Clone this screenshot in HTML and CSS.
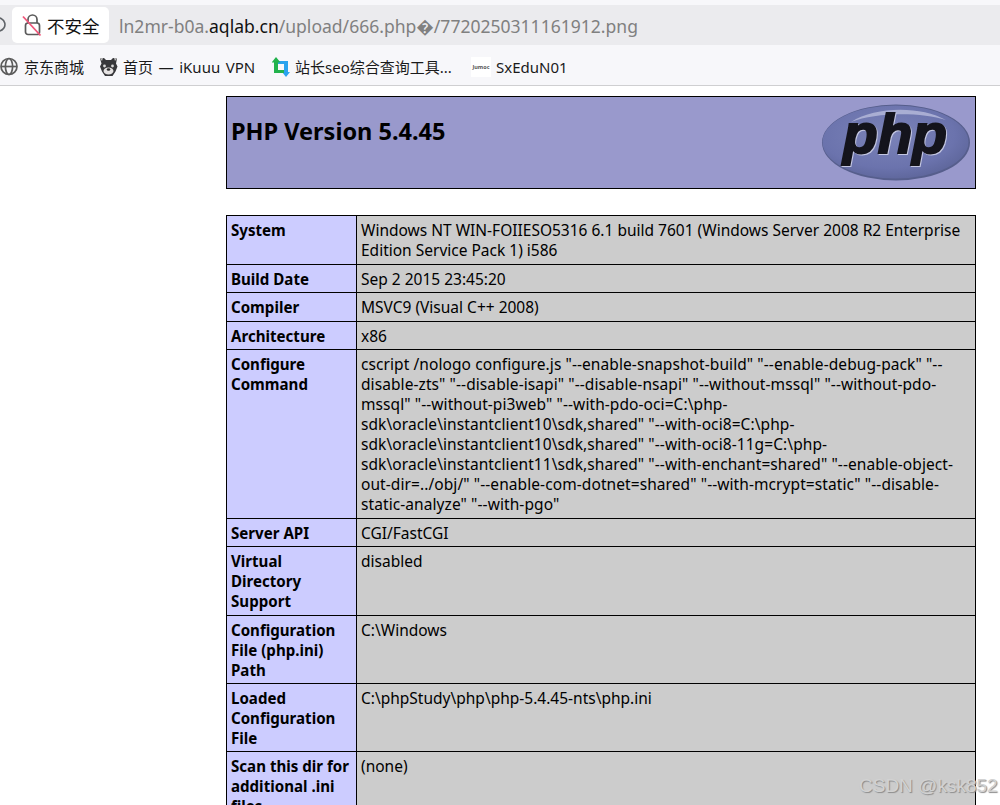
FILE: index.html
```html
<!DOCTYPE html>
<html lang="zh-CN">
<head>
<meta charset="utf-8">
<title>phpinfo()</title>
<link rel="stylesheet" href="styles.css">
</head>
<body>
<header class="chrome">
  <div class="addr-row">
    <svg class="reload" width="6" height="20" viewBox="0 0 6 20"><path d="M-4 3.500A6.500 6.500 0 1 1 -1 16" fill="none" stroke="#5f6368" stroke-width="1.600"/></svg>
    <div class="pill">
      <svg class="lock" width="20" height="24" viewBox="0 0 20 24"><path d="M6 10V6.500a4.500 4.500 0 0 1 9 0V10" fill="none" stroke="#5a5a5a" stroke-width="1.700"/><rect x="3.500" y="10" width="14" height="11.500" rx="2.500" fill="none" stroke="#5a5a5a" stroke-width="1.700"/><path d="M1 3.500 18.500 22.500" stroke="#f0567a" stroke-width="1.800"/></svg>
      <span class="insecure">不安全</span>
    </div>
    <div class="url"><span class="dim">ln2mr-b0a.</span>aqlab.cn<span class="dim">/upload/666.php�/7720250311161912.png</span></div>
  </div>
  <nav class="bookmarks">
    <div class="bm bm-jd">
      <svg class="bm-globe" width="19" height="19" viewBox="0 0 19 19"><g fill="none" stroke="#5c5c5c" stroke-width="1.700"><circle cx="9" cy="9.500" r="8"/><ellipse cx="9" cy="9.500" rx="3.600" ry="8"/><path d="M1 9.500h16"/></g></svg>
      <span>京东商城</span>
    </div>
    <div class="bm bm-ik">
      <svg width="19" height="20" viewBox="0 0 19 20"><path d="M1 1.500 5 1l2 2h5l2-2 4 .5-1 5 1.500 3-2 5-3 4.500H6l-3-4.500-2-5L2.500 6.500z" fill="#37373a"/><path d="M1 1.500 4 1 3 4zM18 1.500 15 1l1 3z" fill="#bdbdbd"/><ellipse cx="9.500" cy="14" rx="5" ry="3.500" fill="#e6e3e3"/><circle cx="5.500" cy="9" r="1.400" fill="#d8d8d8"/><circle cx="13.500" cy="9" r="1.400" fill="#d8d8d8"/><ellipse cx="9.500" cy="12.500" rx="1.800" ry="1.200" fill="#2c2c2c"/></svg>
      <span class="ik-label">首页 — iKuuu VPN</span>
    </div>
    <div class="bm bm-seo">
      <svg width="18" height="20" viewBox="0 0 18 20"><path d="M12 4h4v11h2l-4 5-4-5h2V7H6V4z" fill="#2aa3ee"/><path d="M4 0 8.500 5.500H6V13h6v3H2V5.500H-.500z" fill="#22b24c"/></svg>
      <span>站长seo综合查询工具...</span>
    </div>
    <div class="bm bm-sx">
      <span class="sx-icon">Jumoc</span>
      <span>SxEduN01</span>
    </div>
  </nav>
</header>
<main class="page">
  <div class="banner">
    <h1 class="title">PHP Version 5.4.45</h1>
    <svg class="logo" width="150" height="78" viewBox="0 0 150 78" role="img" aria-label="php">
      <defs>
        <radialGradient id="lg" cx="45%" cy="40%" r="65%"><stop offset="0" stop-color="#7b83b8"/><stop offset=".7" stop-color="#6b73ad"/><stop offset="1" stop-color="#5c6498"/></radialGradient>
      </defs>
      <ellipse cx="75" cy="39.500" rx="74" ry="38" fill="#565e8c"/>
      <ellipse cx="74.500" cy="39" rx="73" ry="36.500" fill="url(#lg)"/>
      <path d="M30 19C55 3 100 3 125 17 100 9 55 9 30 19z" fill="#b8bcdc" opacity=".8"/>
      <text class="logo-text" x="74" y="50" text-anchor="middle" textLength="104" lengthAdjust="spacingAndGlyphs">php</text>
    </svg>
  </div>
  <table class="info">
    <tr><th>System</th><td>Windows NT WIN-FOIIESO5316 6.1 build 7601 (Windows Server 2008 R2 Enterprise<br>Edition Service Pack 1) i586</td></tr>
    <tr><th>Build Date</th><td>Sep 2 2015 23:45:20</td></tr>
    <tr><th>Compiler</th><td>MSVC9 (Visual C++ 2008)</td></tr>
    <tr><th>Architecture</th><td>x86</td></tr>
    <tr><th>Configure<br>Command</th><td class="cmd">cscript /nologo configure.js "--enable-snapshot-build" "--enable-debug-pack" "--<br>disable-zts" "--disable-isapi" "--disable-nsapi" "--without-mssql" "--without-pdo-<br>mssql" "--without-pi3web" "--with-pdo-oci=C:\php-<br>sdk\oracle\instantclient10\sdk,shared" "--with-oci8=C:\php-<br>sdk\oracle\instantclient10\sdk,shared" "--with-oci8-11g=C:\php-<br>sdk\oracle\instantclient11\sdk,shared" "--with-enchant=shared" "--enable-object-<br>out-dir=../obj/" "--enable-com-dotnet=shared" "--with-mcrypt=static" "--disable-<br>static-analyze" "--with-pgo"</td></tr>
    <tr><th>Server API</th><td>CGI/FastCGI</td></tr>
    <tr><th>Virtual<br>Directory<br>Support</th><td>disabled</td></tr>
    <tr><th>Configuration<br>File (php.ini)<br>Path</th><td>C:\Windows</td></tr>
    <tr><th>Loaded<br>Configuration<br>File</th><td>C:\phpStudy\php\php-5.4.45-nts\php.ini</td></tr>
    <tr><th>Scan this dir for<br>additional .ini<br>files</th><td>(none)</td></tr>
  </table>
</main>
<div class="watermark">CSDN @ksk852</div>
</body>
</html>
```
FILE: styles.css
```css
html, body {
  margin: 0;
  padding: 0;
  background: #fff;
}
body {
  width: 1000px;
  height: 805px;
  overflow: hidden;
  position: relative;
  font-family: "Noto Sans", "Noto Sans CJK SC", sans-serif;
  color: #000;
}
.chrome {
  background: #f7f7fa;
  border-bottom: 1px solid #cfcfd1;
  padding-top: 5px;
  height: 80px;
}
.addr-row {
  height: 40px;
  background: #ebebee;
  display: flex;
  align-items: center;
}
.reload {
  width: 6px;
  margin-right: 6px;
  flex: none;
}
.pill {
  width: 97px;
  height: 36px;
  background: #fff;
  border-radius: 5px;
  display: flex;
  align-items: center;
  padding-left: 10px;
  box-sizing: border-box;
  gap: 5px;
  flex: none;
}
.insecure {
  font-family: "Noto Sans CJK SC", sans-serif;
  font-size: 17.500px;
  color: #111;
}
.url {
  margin-left: 10px;
  padding-top: 2px;
  font-size: 17.550px;
  white-space: nowrap;
  color: #111;
}
.dim { color: #808080; }
.bookmarks {
  height: 40px;
  padding-top: 3px;
  box-sizing: border-box;
  display: flex;
  align-items: center;
}
.bm {
  display: flex;
  align-items: center;
  gap: 5px;
  font-size: 15px;
  color: #1a1a1a;
  white-space: nowrap;
  flex: none;
}
.bm-jd { width: 99px; }
.bm-ik { width: 173px; }
.bm-seo { width: 199px; }
.ik-label { word-spacing: 1.700px; }
.sx-icon {
  width: 20px;
  height: 20px;
  font-size: 5.500px;
  line-height: 20px;
  font-weight: 700;
  background: #fff;
  color: #555;
  text-align: center;
  overflow: hidden;
}
.page {
  padding: 10px 0 0 226px;
}
.banner {
  width: 750px;
  height: 93px;
  box-sizing: border-box;
  background: #9999cc;
  border: 1px solid #000;
  display: flex;
  justify-content: space-between;
  align-items: flex-start;
  padding: 6px 4px 0 4px;
}
.title {
  margin: 11px 0 0;
  font-size: 23.500px;
  line-height: 34px;
  font-weight: 700;
}
.logo-text {
  font-family: "Liberation Sans", sans-serif;
  font-weight: 700;
  font-style: italic;
  font-size: 56px;
  fill: #14141c;
  stroke: #14141c;
  stroke-width: 2px;
  filter: drop-shadow(1px 1px 0 #c4c7e2);
}
.logo { flex: none; }
.info {
  margin-top: 26.400px;
  width: 750px;
  table-layout: fixed;
  border-collapse: collapse;
  font-size: 15.500px;
  line-height: 20px;
}
.info th, .info td {
  border: 1px solid #000;
  padding: 4px 4px 3.400px;
  vertical-align: top;
  text-align: left;
  white-space: nowrap;
}
.info th {
  width: 121px;
  background: #ccccff;
  font-weight: 700;
  font-size: 15.100px;
}
.info td {
  background: #cccccc;
}
.info td.cmd {
  letter-spacing: .08px;
  padding-bottom: 3.900px;
}
.watermark {
  position: absolute;
  left: 859px;
  top: 775px;
  font-family: "Liberation Sans", sans-serif;
  font-size: 19px;
  color: #d2d2d2;
  text-shadow: 1px 1px 1px #8a8a8a;
  white-space: nowrap;
}
```
